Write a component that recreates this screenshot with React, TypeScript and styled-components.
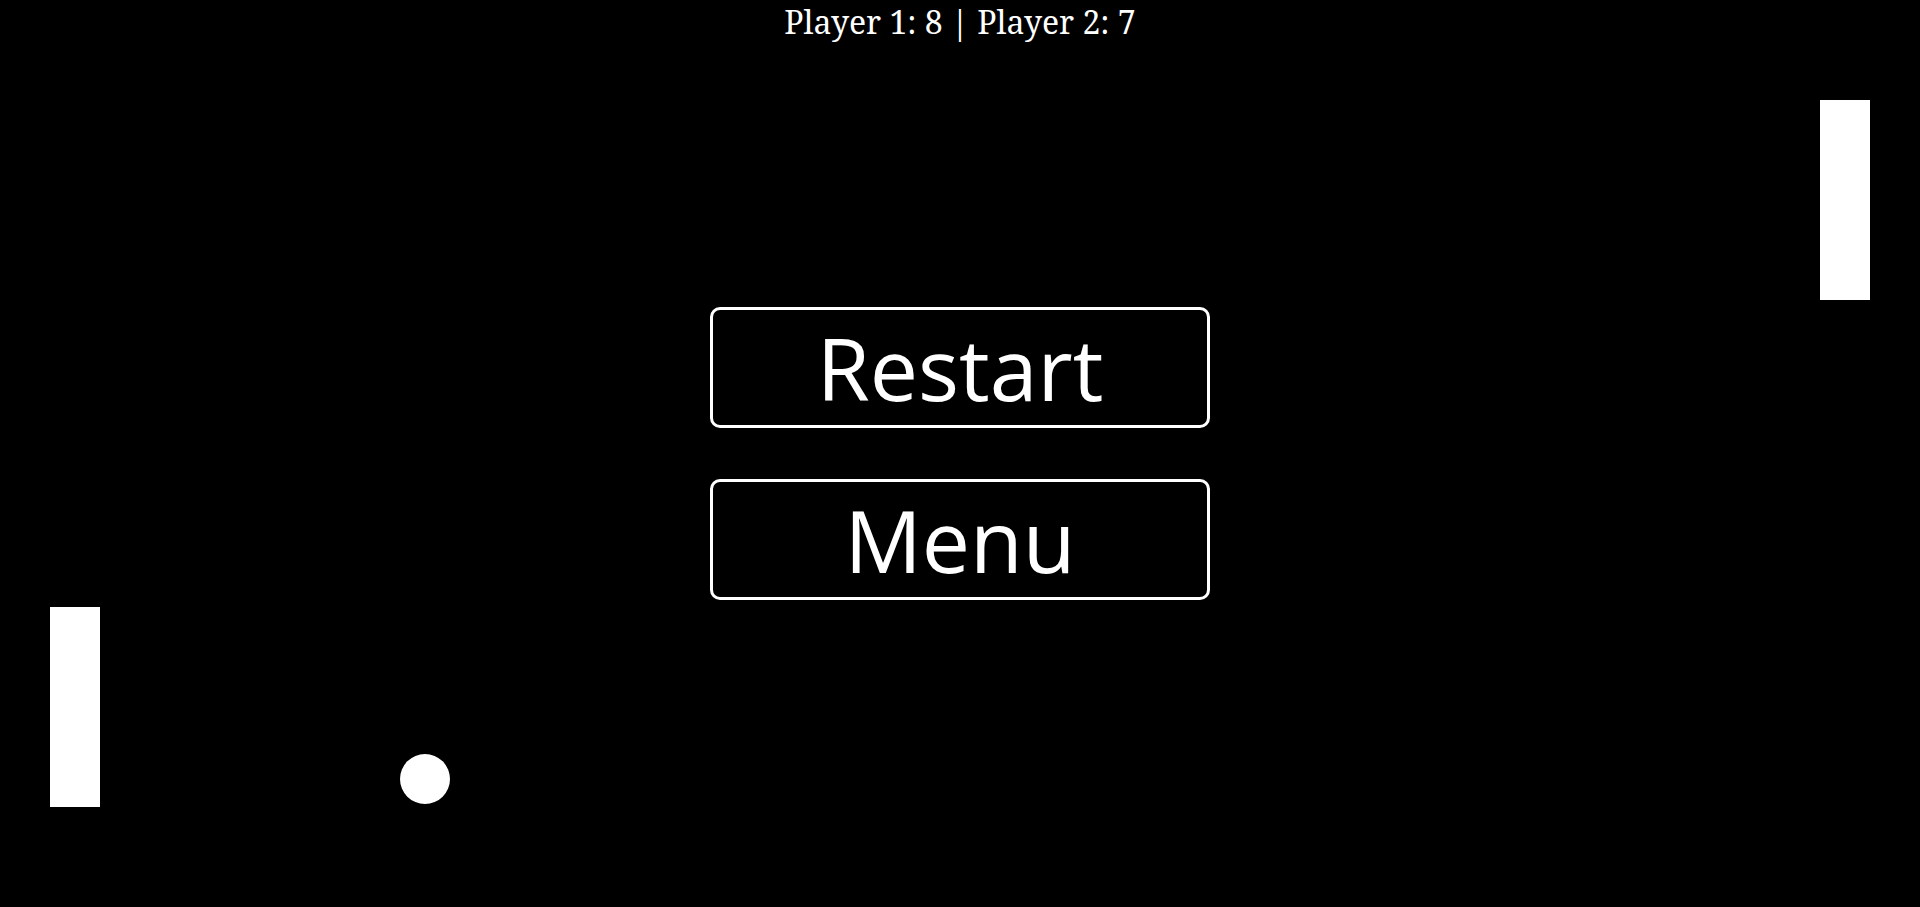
import React from "react";
import styled, { createGlobalStyle } from "styled-components";

const Global = createGlobalStyle`
  html, body { margin: 0; padding: 0; background: #000; overflow: hidden; }
`;

const Stage = styled.main`
  position: relative;
  width: 100vw;
  height: 100vh;
  background: #000;
  display: flex;
  flex-direction: column;
  align-items: center;
  justify-content: center;
  gap: 51px;
`;

const Score = styled.div`
  position: absolute;
  top: 0;
  left: 0;
  right: 0;
  text-align: center;
  color: #fff;
  font-family: "Noto Serif", "DejaVu Serif", serif;
  font-size: 32px;
`;

const Button = styled.button`
  box-sizing: border-box;
  width: 500px;
  height: 121px;
  background: #000;
  color: #fff;
  border: 3px solid #fff;
  border-radius: 10px;
  font-family: "Open Sans", "Noto Sans", sans-serif;
  font-size: 86px;
  line-height: 1;
  padding: 0;
  cursor: pointer;
`;

const Paddle = styled.div<{ $x: number; $y: number }>`
  position: absolute;
  left: ${(p) => p.$x}px;
  top: ${(p) => p.$y}px;
  width: 50px;
  height: 200px;
  background: #fff;
`;

const Ball = styled.div<{ $x: number; $y: number }>`
  position: absolute;
  left: ${(p) => p.$x}px;
  top: ${(p) => p.$y}px;
  width: 50px;
  height: 50px;
  border-radius: 50%;
  background: #fff;
`;

export default function App() {
  return (
    <>
      <Global />
      <Stage>
        <Score>Player 1: 8 | Player 2: 7</Score>
        <Paddle $x={1820} $y={100} />
        <Paddle $x={50} $y={607} />
        <Ball $x={400} $y={754} />
        <Button>Restart</Button>
        <Button>Menu</Button>
      </Stage>
    </>
  );
}
